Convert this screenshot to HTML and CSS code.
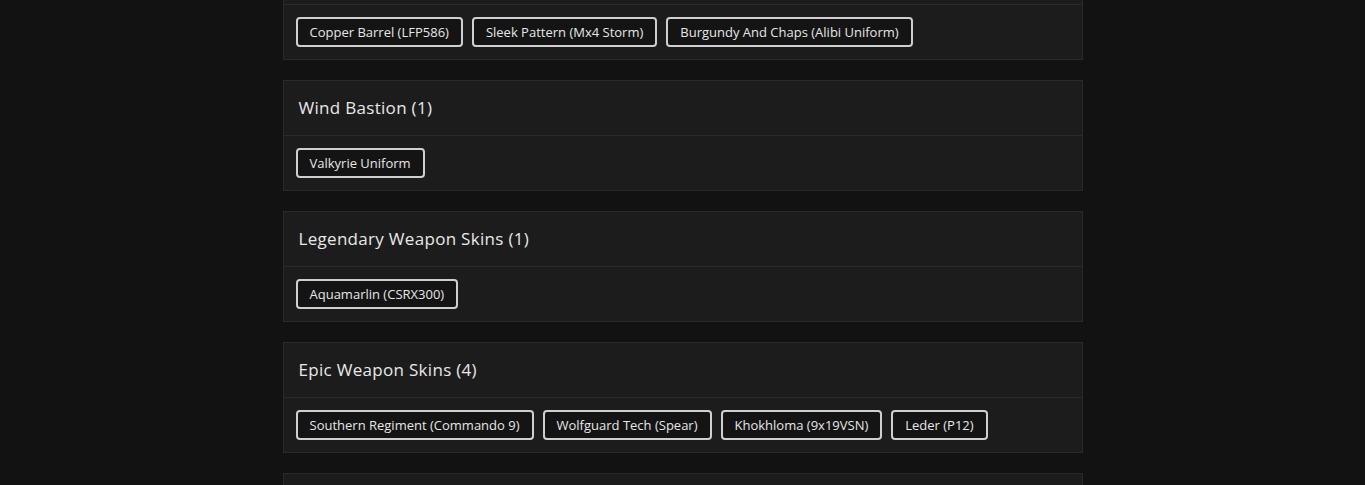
FILE: index.html
```html
<!DOCTYPE html>
<html lang="en">
<head>
<meta charset="utf-8">
<title>Skins</title>
<link rel="stylesheet" href="styles.css">
</head>
<body>
<main class="list">
  <section class="card">
    <h2 class="card-head">Rare Weapon Skins (3)</h2>
    <div class="card-body">
      <span class="tag">Copper Barrel (LFP586)</span>
      <span class="tag">Sleek Pattern (Mx4 Storm)</span>
      <span class="tag">Burgundy And Chaps (Alibi Uniform)</span>
    </div>
  </section>
  <section class="card">
    <h2 class="card-head">Wind Bastion (1)</h2>
    <div class="card-body">
      <span class="tag">Valkyrie Uniform</span>
    </div>
  </section>
  <section class="card">
    <h2 class="card-head">Legendary Weapon Skins (1)</h2>
    <div class="card-body">
      <span class="tag">Aquamarlin (CSRX300)</span>
    </div>
  </section>
  <section class="card">
    <h2 class="card-head">Epic Weapon Skins (4)</h2>
    <div class="card-body">
      <span class="tag">Southern Regiment (Commando 9)</span>
      <span class="tag">Wolfguard Tech (Spear)</span>
      <span class="tag">Khokhloma (9x19VSN)</span>
      <span class="tag">Leder (P12)</span>
    </div>
  </section>
  <section class="card">
    <h2 class="card-head">Uncommon Weapon Skins (2)</h2>
    <div class="card-body">
      <span class="tag">Placeholder</span>
    </div>
  </section>
</main>
</body>
</html>
```
FILE: styles.css
```css
html, body {
  margin: 0;
  padding: 0;
  background: #121212;
  font-family: "Open Sans", "Liberation Sans", sans-serif;
  color: #e4e4e4;
  overflow: hidden;
  height: 485px;
}
.list {
  width: 800px;
  margin: -51px auto 0;
  display: flex;
  flex-direction: column;
  gap: 20px;
}
.card {
  background: #1c1c1c;
  border: 1px solid #2a2a2a;
}
.card-head {
  box-sizing: border-box;
  margin: 0;
  height: 55px;
  display: flex;
  align-items: center;
  padding: 0 15px 2px;
  font-size: 17px;
  font-weight: 500;
  letter-spacing: 0.3px;
  color: #e8e8e8;
  border-bottom: 1px solid #2a2a2a;
}
.card-body {
  padding: 12px;
  display: flex;
  flex-wrap: wrap;
  gap: 9px;
}
.tag {
  box-sizing: border-box;
  height: 30px;
  display: inline-flex;
  align-items: center;
  padding: 0 12px;
  font-size: 13px;
  color: #e6e6e6;
  background: #141414;
  border: 2px solid #cfcfcf;
  border-radius: 4px;
}
```
